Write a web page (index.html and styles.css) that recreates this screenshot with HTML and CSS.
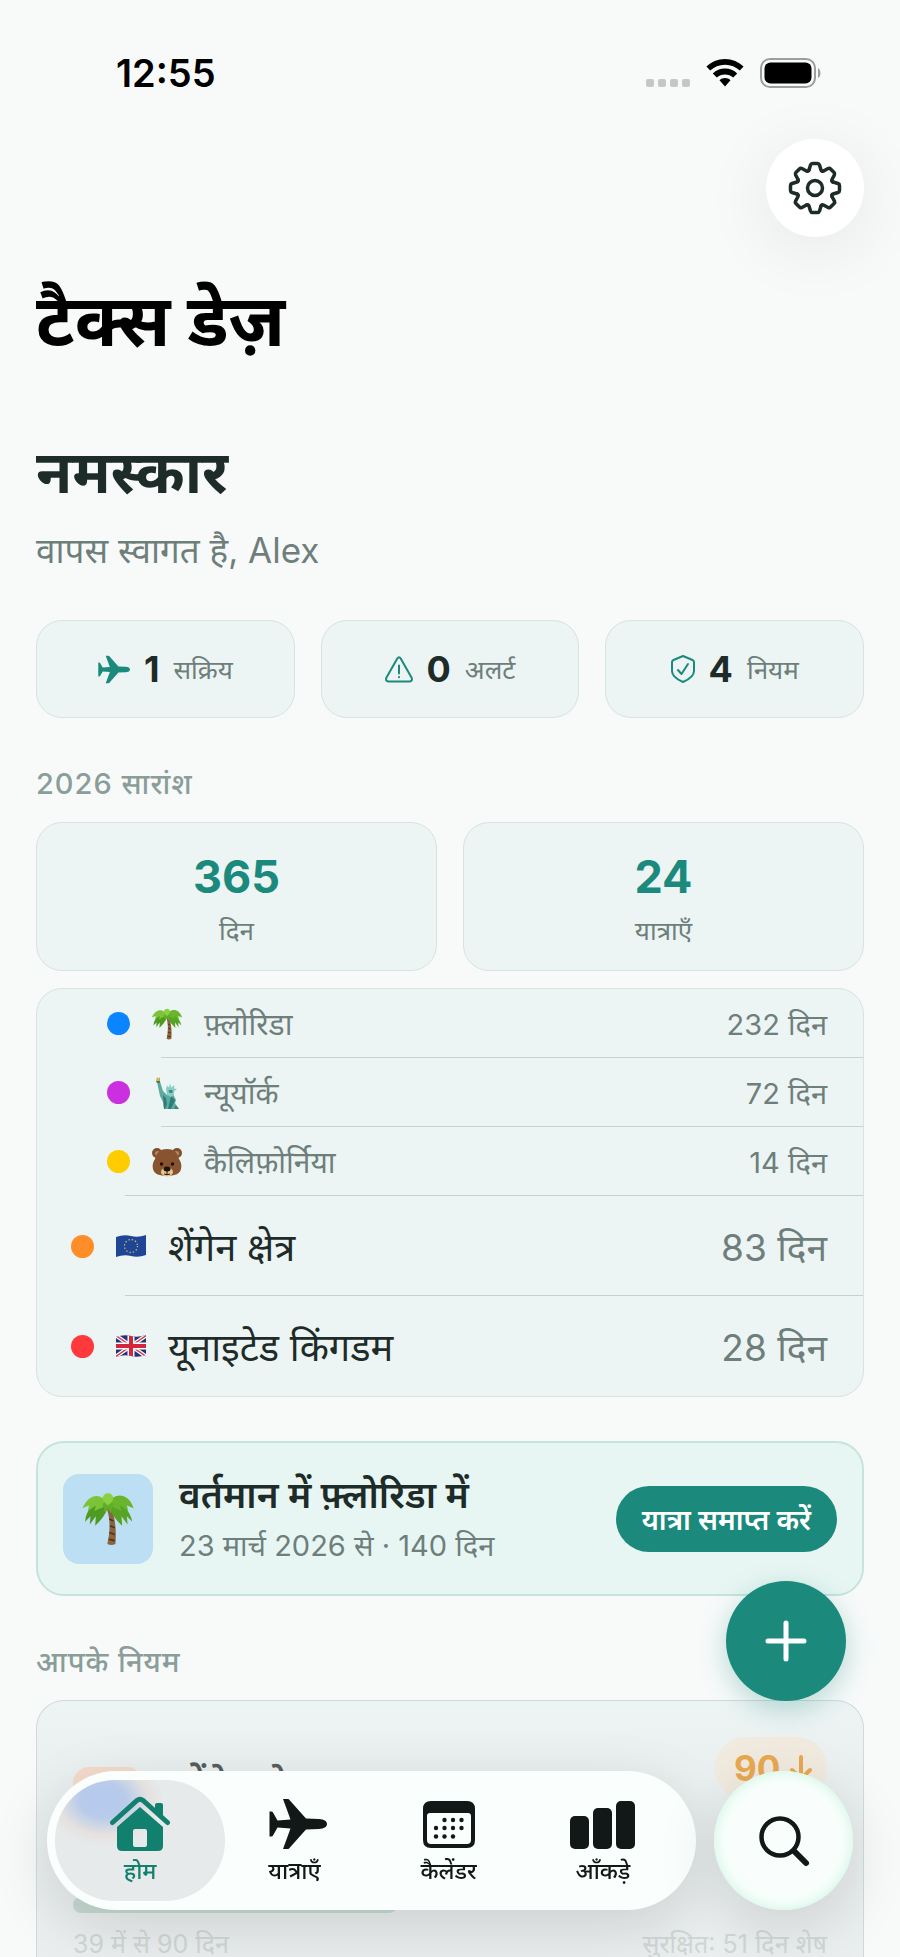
FILE: index.html
```html
<!DOCTYPE html>
<html lang="hi">
<head>
  <meta charset="UTF-8">
  <meta name="viewport" content="width=device-width, initial-scale=1">
  <title>टैक्स डेज़</title>
  <link rel="stylesheet" href="styles.css">
</head>
<body>
  <!-- shared icons -->
  <svg width="0" height="0" class="sprite" aria-hidden="true">
    <symbol id="plane" viewBox="0 0 58 52">
      <path d="M14 1h4.500c1 0 1.600.4 2.200 1.200L37 20.500l13 .5c5 .2 8 2 8 5s-3 4.800-8 5l-13 .5L20.700 49.800c-.6.800-1.200 1.200-2.200 1.200H14l7.500-20.500-13-1L4 37.500c-.4.700-.9 1-1.700 1H.5v-25h1.800c.8 0 1.300.3 1.700 1l4.500 8 13-1z"/>
    </symbol>
    <symbol id="palm" viewBox="0 0 40 40">
      <path d="M19 12c3 8 2.500 18 .5 26.500q3 1.500 6 0c.8-9 0-19-3-26.500z" fill="#8a6440"/>
      <path d="M21 20l3 1.500M21.500 25l3.500 1.500M21 30l4 1.500M20.500 35l4.500 1" stroke="#4f331b" stroke-width="1.200"/>
      <path d="M19 9C12 6 4 11 3 22l4-4-.5 6L11 18l-.5 7c4-4 8-8 9.500-15z" fill="#4f9a20"/>
      <path d="M21 9c7-3 15 3 17 13l-4-4 .5 6-4.500-6 .5 7c-4-4-8-8-9.500-15z" fill="#57a324"/>
      <path d="M20 9C15 0 6 1 1 12l5-2-1 4 6-4-1 4c4-2 7-3 10-5z" fill="#7cc437"/>
      <path d="M20 9c4-9 15-9 19 3l-5-2 1 4-6-4 1 4c-4-2-7-3-10-5z" fill="#69b52b"/>
      <path d="M16 9l2 7 2-4 2 4 2-7-4-4z" fill="#5fae28"/>
      <path d="M20 10c-6-4-4-9 0-9s6 5 0 9z" fill="#8bcf43"/>
    </symbol>
    <symbol id="tooth" viewBox="0 0 54 54">
      <path d="M21 9L22.500 4Q23 2.500 24.500 2.500H29.500Q31 2.500 31.500 4L33 9Q33.600 10.900 35.500 10"/>
    </symbol>
  </svg>

  <header class="status-bar">
    <span class="time">12:55</span>
    <div class="signals">
      <svg width="44" height="8" viewBox="0 0 44 8" fill="#c4c7c6"><rect width="8" height="8" rx="2"/><rect x="12" width="8" height="8" rx="2"/><rect x="24" width="8" height="8" rx="2"/><rect x="36" width="8" height="8" rx="2"/></svg>
      <svg width="38" height="28" viewBox="0 0 38 28"><path d="M19 0c7.300 0 13.900 2.900 18.600 7.600l-3.800 4C30 8 24.800 5.800 19 5.800S8 8 4.200 11.600l-3.800-4C5.100 2.900 11.700 0 19 0z"/><path d="M19 9.500c4.700 0 9 1.900 12.200 4.900l-4 4.200C25 16.600 22.200 15.400 19 15.400s-6 1.200-8.200 3.200l-4-4.200C10 11.400 14.300 9.500 19 9.500z"/><path d="M19 19c2.100 0 4.100.8 5.500 2.200L19 27.500l-5.500-6.300C14.900 19.800 16.900 19 19 19z"/></svg>
      <svg width="62" height="30" viewBox="0 0 62 30"><rect x="1" y="1" width="54" height="28" rx="9" fill="none" stroke="#9b9e9d" stroke-width="2"/><rect x="4.500" y="4.500" width="47" height="21" rx="6"/><path d="M58 10c3 1 3.500 9 0 10z" fill="#9b9e9d"/></svg>
    </div>
  </header>

  <main>
    <div class="toolbar">
      <button class="settings" aria-label="सेटिंग्स">
        <svg width="54" height="54" viewBox="0 0 54 54" fill="none" stroke="#1d2b29" stroke-width="3.500" stroke-linecap="round" stroke-linejoin="round">
          <use href="#tooth"/>
          <use href="#tooth" transform="rotate(45 27 27)"/>
          <use href="#tooth" transform="rotate(90 27 27)"/>
          <use href="#tooth" transform="rotate(135 27 27)"/>
          <use href="#tooth" transform="rotate(180 27 27)"/>
          <use href="#tooth" transform="rotate(225 27 27)"/>
          <use href="#tooth" transform="rotate(270 27 27)"/>
          <use href="#tooth" transform="rotate(315 27 27)"/>
          <circle cx="27" cy="27" r="7.500"/>
        </svg>
      </button>
    </div>

    <h1>टैक्स डेज़</h1>
    <h2>नमस्कार</h2>
    <p class="welcome">वापस स्वागत है, Alex</p>

    <div class="chips">
      <div class="chip">
        <svg width="32" height="29" fill="#1b8a7c"><use href="#plane"/></svg>
        <b>1</b><span>सक्रिय</span>
      </div>
      <div class="chip">
        <svg width="28" height="27" viewBox="0 0 28 27" fill="none" stroke="#1b8a7c" stroke-width="2" stroke-linecap="round" stroke-linejoin="round"><path d="M12.300 2.500q1.700-2.500 3.400 0l10.800 19q1.500 3.500-2 4h-21q-3.500-.5-2-4z"/><path d="M14 9.500v8M14 21v.3"/></svg>
        <b>0</b><span>अलर्ट</span>
      </div>
      <div class="chip">
        <svg width="24" height="28" viewBox="0 0 24 28" fill="none" stroke="#1b8a7c" stroke-width="2" stroke-linecap="round" stroke-linejoin="round"><path d="M12 1l9.500 4q1.500.7 1.500 2.300V16c0 5-4 8-11 11C5 24 1 21 1 16V7.300Q1 5.700 2.500 5z"/><path d="M7 15l3.500 4L17 9"/></svg>
        <b>4</b><span>नियम</span>
      </div>
    </div>

    <h3>2026 सारांश</h3>
    <div class="totals">
      <div class="total"><b>365</b><span>दिन</span></div>
      <div class="total"><b>24</b><span>यात्राएँ</span></div>
    </div>

    <ul class="places">
      <li class="sub">
        <i class="dot blue"></i>
        <svg class="emoji" width="32" height="34"><use href="#palm"/></svg>
        <span class="name">फ़्लोरिडा</span><span class="days">232 दिन</span>
      </li>
      <li class="sub">
        <i class="dot purple"></i>
        <svg class="emoji" width="32" height="34" viewBox="0 0 32 34"><path d="M6 6l3-.5L12 15l4 4 6-1 3 6-1 3 3 6H13l-1-7-3-6z" fill="#5cab9f"/><path d="M12 19l3 3 1 6-2 5h-1zM20 20l-3 13h3l4-9z" fill="#2f7c78"/><path d="M15 13l1-3.500 2 2 1-4 1.500 4 3-2.500-.5 3.500 3 .5-3 2.500v3l-3 2.500-4-2z" fill="#86cfc2"/><path d="M17.500 14h4v3h-3z" fill="#3c8b84"/><path d="M5 5h4v2H6zM25 29l3 4h-5z" fill="#3d7f74"/><path d="M5 5l1-4 1.500 1.500L9 1 9 5z" fill="#d4b04a"/></svg>
        <span class="name">न्यूयॉर्क</span><span class="days">72 दिन</span>
      </li>
      <li class="sub">
        <i class="dot yellow"></i>
        <svg class="emoji" width="32" height="32" viewBox="0 0 32 32"><circle cx="6" cy="7" r="5" fill="#80502f"/><circle cx="26" cy="7" r="5" fill="#80502f"/><circle cx="6.500" cy="7.500" r="2.500" fill="#b98560"/><circle cx="25.500" cy="7.500" r="2.500" fill="#b98560"/><path d="M16 3c8 0 11 5 12 10 2 3 3 6 2 10-1 5-7 7-14 7S3 28 2 23c-1-4 0-7 2-10C5 8 8 3 16 3z" fill="#87542f"/><ellipse cx="16" cy="26" rx="6" ry="4.500" fill="#e6c68e"/><ellipse cx="16" cy="23" rx="3.500" ry="2.500" fill="#1c1310"/><circle cx="10.500" cy="18" r="1.700" fill="#1c1310"/><circle cx="21.500" cy="18" r="1.700" fill="#1c1310"/><path d="M16 25v3m-3 0q3 1.500 6 0" stroke="#1c1310" fill="none"/></svg>
        <span class="name">कैलिफ़ोर्निया</span><span class="days">14 दिन</span>
      </li>
      <li>
        <i class="dot orange"></i>
        <svg class="emoji" width="32" height="24" viewBox="0 0 32 24"><path d="M1 3q8-3 15-1t15-1v20q-8 3-15 1T1 23z" fill="#1f4596"/><circle cx="16" cy="12" r="6.500" fill="none" stroke="#d9c25a" stroke-width="1.300" stroke-dasharray="1.300 2.100"/></svg>
        <span class="name">शेंगेन क्षेत्र</span><span class="days">83 दिन</span>
      </li>
      <li>
        <i class="dot red"></i>
        <svg class="emoji" width="32" height="24" viewBox="0 0 32 24"><clipPath id="wave"><path d="M1 3q8-3 15-1t15-1v20q-8 3-15 1T1 23z"/></clipPath><g clip-path="url(#wave)"><path d="M0 0h32v24H0z" fill="#22327c"/><path d="M0 1l32 22M0 23L32 1" stroke="#fff" stroke-width="4"/><path d="M0 1l32 22M0 23L32 1" stroke="#d63a4a" stroke-width="1.500"/><path d="M16 0v24M0 12h32" stroke="#fff" stroke-width="7"/><path d="M16 0v24M0 12h32" stroke="#d3253b" stroke-width="4"/></g></svg>
        <span class="name">यूनाइटेड किंगडम</span><span class="days">28 दिन</span>
      </li>
    </ul>

    <section class="current">
      <div class="thumb"><svg width="54" height="54"><use href="#palm"/></svg></div>
      <div class="info">
        <h4>वर्तमान में फ़्लोरिडा में</h4>
        <p>23 मार्च 2026 से · 140 दिन</p>
      </div>
      <button class="end-trip">यात्रा समाप्त करें</button>
    </section>

    <h3>आपके नियम</h3>
    <section class="rule">
      <div class="rule-top">
        <div class="rule-flag"></div>
        <div class="rule-text">
          <h4>शेंगेन क्षेत्र</h4>
        </div>
        <span class="badge">90 <svg width="22" height="26" viewBox="0 0 22 26" fill="none" stroke="currentColor" stroke-width="4" stroke-linecap="round" stroke-linejoin="round"><path d="M11 2v21M2 15l9 9 9-9"/></svg></span>
      </div>
      <div class="progress"><div style="width: 43%"></div></div>
      <div class="rule-foot"><span>39 में से 90 दिन</span><span>सुरक्षित: 51 दिन शेष</span></div>
    </section>
  </main>

  <button class="fab" aria-label="यात्रा जोड़ें">
    <svg width="42" height="42" viewBox="0 0 42 42" stroke="#fff" stroke-width="5" stroke-linecap="round"><path d="M21 3v36M3 21h36"/></svg>
  </button>

  <div class="bottom">
    <nav>
      <a href="#" class="active">
        <svg width="62" height="56" viewBox="0 0 62 56" fill="currentColor"><path d="M3.500 26.500L28 4.500q3-2.500 6 0l24.500 22" fill="none" stroke="currentColor" stroke-width="5" stroke-linecap="round"/><path d="M48 7h4q2 0 2 2v14l-8-7V9q0-2 2-2z"/><path fill-rule="evenodd" d="M31 11l23 20v19q0 5-5 5H13q-5 0-5-5V31zM26 33q-2 0-2 2v14q0 2 2 2h10q2 0 2-2V35q0-2-2-2z"/></svg>
        <span>होम</span>
      </a>
      <a href="#">
        <svg width="66" height="56" fill="currentColor"><use href="#plane" x="8" width="58" height="56"/></svg>
        <span>यात्राएँ</span>
      </a>
      <a href="#">
        <svg width="52" height="56" viewBox="0 0 52 56" fill="currentColor"><path fill-rule="evenodd" d="M8 5h36q8 0 8 8v31q0 8-8 8H8q-8 0-8-8V13q0-8 8-8zM7 17q-3 0-3 3v24q0 4 4 4h36q4 0 4-4V20q0-3-3-3z"/><circle cx="21.500" cy="24" r="2.200"/><circle cx="30" cy="24" r="2.200"/><circle cx="38.500" cy="24" r="2.200"/><circle cx="13" cy="32" r="2.200"/><circle cx="21.500" cy="32" r="2.200"/><circle cx="30" cy="32" r="2.200"/><circle cx="38.500" cy="32" r="2.200"/><circle cx="13" cy="40.500" r="2.200"/><circle cx="21.500" cy="40.500" r="2.200"/><circle cx="30" cy="40.500" r="2.200"/></svg>
        <span>कैलेंडर</span>
      </a>
      <a href="#">
        <svg width="66" height="56" viewBox="0 0 66 56" fill="currentColor"><rect y="20" width="19" height="33" rx="5"/><rect x="23" y="12" width="19" height="41" rx="5"/><rect x="46" y="5" width="19" height="48" rx="5"/></svg>
        <span>आँकड़े</span>
      </a>
    </nav>
    <button class="search" aria-label="खोजें">
      <svg width="54" height="54" viewBox="0 0 54 54" fill="none" stroke="#121817" stroke-linecap="round"><circle cx="23" cy="23" r="18.500" stroke-width="4.500"/><path d="M37 37l12 12" stroke-width="6"/></svg>
    </button>
  </div>
</body>
</html>
```
FILE: styles.css
```css
* {
  box-sizing: border-box;
}
body {
  margin: 0;
  background: #f8fafa;
  color: #1d2b29;
  font-family: Inter, "Noto Sans", "Noto Sans Devanagari", sans-serif;
}
h1, h2, h3, h4, p, ul {
  margin: 0;
  padding: 0;
}
button {
  border: none;
  cursor: pointer;
  font-family: inherit;
}
svg {
  display: block;
  flex: none;
}
.sprite {
  position: absolute;
}

/* status bar */
.status-bar {
  display: flex;
  justify-content: space-between;
  align-items: center;
  height: 139px;
  padding: 6px 78px 0 116px;
  color: #000;
}
.time {
  font-size: 38px;
  font-weight: 600;
}
.signals {
  display: flex;
  align-items: center;
  gap: 16px;
}
.signals svg:first-child {
  margin-top: 20px;
}

main {
  padding: 0 36px;
}
.toolbar {
  display: flex;
  justify-content: flex-end;
}
.settings {
  display: grid;
  place-items: center;
  width: 98px;
  height: 98px;
  padding: 0;
  border-radius: 50%;
  background: #fff;
  box-shadow: 0 12px 70px rgba(0, 0, 0, 0.08);
}
h1 {
  margin-top: 28px;
  color: #000;
  font-size: 72px;
  line-height: 110px;
}
h2 {
  margin-top: 52px;
  font-size: 59px;
  line-height: 90px;
}
.welcome {
  margin-top: 3px;
  color: #6e7f7b;
  font-size: 35px;
  line-height: 60px;
}

/* counters */
.chips {
  display: flex;
  gap: 26px;
  margin-top: 40px;
}
.chip {
  flex: 1;
  display: flex;
  justify-content: center;
  align-items: center;
  gap: 14px;
  height: 98px;
  border: 1px solid #d8e2e1;
  border-radius: 26px;
  background: #edf4f4;
}
.chip b {
  font-size: 36px;
}
.chip span {
  color: #6e7f7b;
  font-size: 26px;
}
h3 {
  margin-top: 40px;
  color: #8a9d98;
  font-size: 29px;
  line-height: 52px;
  font-weight: 500;
  letter-spacing: 1px;
}
.totals {
  display: flex;
  gap: 26px;
  margin-top: 12px;
}
.total {
  flex: 1;
  display: flex;
  flex-direction: column;
  align-items: center;
  height: 149px;
  padding-top: 24px;
  border: 1px solid #d8e2e1;
  border-radius: 26px;
  background: #edf4f4;
}
.total b {
  color: #1b8a7c;
  font-size: 45px;
  line-height: 60px;
}
.total span {
  color: #6e7f7b;
  font-size: 26px;
  line-height: 48px;
}

/* days by place */
.places {
  margin-top: 17px;
  border: 1px solid #d8e2e1;
  border-radius: 26px;
  background: #edf4f4;
  list-style: none;
}
.places li {
  display: flex;
  align-items: center;
  height: 100px;
  padding: 0 36px 0 0;
  margin-left: 34px;
  font-size: 38px;
  background: linear-gradient(#c8d1cf, #c8d1cf) 54px 100% / 100% 1px no-repeat;
}
.places li:last-child {
  background: none;
}
.places .sub {
  height: 69px;
  margin-left: 70px;
  color: #6e7f7b;
  font-size: 30px;
}
.places .sub:nth-child(3) {
  background-position: 18px 100%;
}
.dot {
  width: 23px;
  height: 23px;
  border-radius: 50%;
}
.blue { background: #0a84ff; }
.purple { background: #cb30e0; }
.yellow { background: #ffcc00; }
.orange { background: #ff8d28; }
.red { background: #ff383c; }
.emoji {
  margin-left: 21px;
}
.name {
  margin-left: 21px;
}
.days {
  margin-left: auto;
  color: #6e7f7b;
  font-size: 37px;
}
.sub .days {
  font-size: 29px;
}

/* current trip */
.current {
  display: flex;
  align-items: center;
  height: 155px;
  margin-top: 44px;
  padding: 0 25px;
  border: 2px solid #c4e4dc;
  border-radius: 28px;
  background: #e8f6f3;
}
.thumb {
  display: grid;
  place-items: center;
  width: 90px;
  height: 90px;
  border-radius: 16px;
  background: #bcdff4;
}
.info {
  flex: 1;
  margin-left: 26px;
}
.info h4, .rule-text h4 {
  font-size: 37px;
  line-height: 54px;
  font-weight: 600;
}
.info p {
  color: #6e7f7b;
  font-size: 29px;
  line-height: 48px;
}
.end-trip {
  height: 66px;
  padding: 0 26px;
  border-radius: 33px;
  background: #1b8a7c;
  color: #fff;
  font-size: 28px;
  font-weight: 600;
}

/* rule card, mostly under the tab bar */
.rule {
  margin-top: 12px;
  padding: 36px 36px 0;
  border: 1px solid #d0dad9;
  border-bottom: none;
  border-radius: 28px 28px 0 0;
  background: linear-gradient(#edf4f4, #e9eeee 100px, #eaeeee);
}
.rule-top {
  display: flex;
  height: 160px;
}
.rule-flag {
  width: 70px;
  height: 70px;
  margin-top: 30px;
  border-radius: 16px;
  background: #f4dccb;
}
.rule-text {
  flex: 1;
  margin-left: 36px;
  padding-top: 20px;
  color: #555f5e;
}
.badge {
  display: flex;
  align-items: center;
  gap: 10px;
  width: 112px;
  height: 62px;
  padding-left: 19px;
  border-radius: 31px;
  background: #f0eadf;
  color: #e8a850;
  font-size: 35px;
  font-weight: 700;
}
.progress {
  height: 16px;
}
.progress div {
  height: 16px;
  border-radius: 8px;
  background: #c6dbd3;
}
.rule-foot {
  display: flex;
  justify-content: space-between;
  height: 44px;
  padding-top: 18px;
  color: #d0d6d5;
  font-size: 25px;
  line-height: 26px;
}

/* floating controls */
.fab {
  position: fixed;
  right: 54px;
  bottom: 256px;
  display: grid;
  place-items: center;
  width: 120px;
  height: 120px;
  padding: 0;
  border-radius: 50%;
  background: #1b8a7c;
  box-shadow: 0 8px 28px rgba(27, 138, 124, 0.3);
}
.bottom {
  position: fixed;
  left: 47px;
  right: 47px;
  bottom: 47px;
  display: flex;
  gap: 18px;
}
nav {
  flex: 1;
  display: flex;
  height: 139px;
  padding: 9px 16px;
  border-radius: 70px;
  background: #fafefd;
  box-shadow: 0 16px 60px rgba(0, 0, 0, 0.13);
}
nav a {
  flex: 1;
  display: flex;
  flex-direction: column;
  align-items: center;
  padding-top: 16px;
  color: #121817;
  font-size: 23px;
  line-height: 38px;
  font-weight: 500;
  text-decoration: none;
}
/* the highlight is a little wider than its tab */
nav .active {
  margin: 0 -8px;
  padding: 16px 8px 0;
  flex: 1 0 16px;
  border-radius: 60px;
  background: radial-gradient(ellipse 60px 46px at 48px 20px, #b3c9ee 0, #b8cbea 38%, #e5e1df 75%, #e6eaea 100%);
  color: #11806f;
}
.search {
  display: grid;
  place-items: center;
  width: 139px;
  height: 139px;
  padding: 0;
  border-radius: 50%;
  background: #f9fefc;
  box-shadow: inset 0 0 14px #c9f5df, 0 16px 60px rgba(0, 0, 0, 0.13);
}
```
